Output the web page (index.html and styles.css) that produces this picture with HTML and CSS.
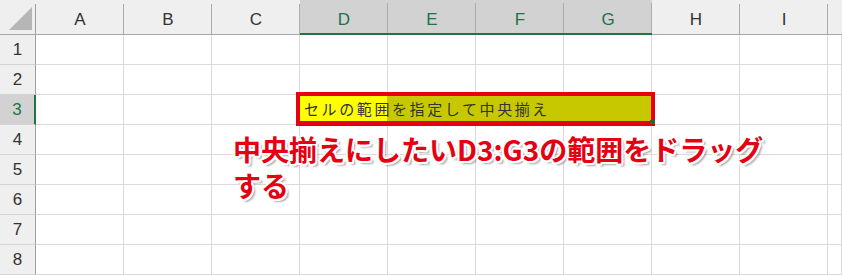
FILE: index.html
```html
<!DOCTYPE html>
<html>
    <head>
        <meta charset = utf-8>
        <title>中央揃え</title>
        <link rel="stylesheet" href="styles.css">
    </head>

    <body>
        <div class = sheet>
            <div class = corner>
                <svg width = 23 height = 23 viewBox = '0 0 23 23'><polygon points = '0,23 23,0 23,23' fill = '#b6b6b6'/></svg>
            </div>
            <div class = col>A</div>
            <div class = col>B</div>
            <div class = col>C</div>
            <div class = 'col on'>D</div>
            <div class = 'col on'>E</div>
            <div class = 'col on'>F</div>
            <div class = 'col on'>G</div>
            <div class = col>H</div>
            <div class = col>I</div>
            <div class = 'col last'></div>

            <div class = num>1</div>
            <div class = cell></div><div class = cell></div><div class = cell></div><div class = cell></div><div class = cell></div>
            <div class = cell></div><div class = cell></div><div class = cell></div><div class = cell></div><div class = cell></div>

            <div class = num>2</div>
            <div class = cell></div><div class = cell></div><div class = cell></div><div class = cell></div><div class = cell></div>
            <div class = cell></div><div class = cell></div><div class = cell></div><div class = cell></div><div class = cell></div>

            <div class = 'num on'>3</div>
            <div class = cell></div><div class = cell></div><div class = cell></div>
            <div class = range>セルの範囲を指定して中央揃え</div>
            <div class = cell></div><div class = cell></div><div class = cell></div>

            <div class = num>4</div>
            <div class = cell></div><div class = cell></div><div class = cell></div><div class = cell></div><div class = cell></div>
            <div class = cell></div><div class = cell></div><div class = cell></div><div class = cell></div><div class = cell></div>

            <div class = num>5</div>
            <div class = cell></div><div class = cell></div><div class = cell></div><div class = cell></div><div class = cell></div>
            <div class = cell></div><div class = cell></div><div class = cell></div><div class = cell></div><div class = cell></div>

            <div class = num>6</div>
            <div class = cell></div><div class = cell></div><div class = cell></div><div class = cell></div><div class = cell></div>
            <div class = cell></div><div class = cell></div><div class = cell></div><div class = cell></div><div class = cell></div>

            <div class = num>7</div>
            <div class = cell></div><div class = cell></div><div class = cell></div><div class = cell></div><div class = cell></div>
            <div class = cell></div><div class = cell></div><div class = cell></div><div class = cell></div><div class = cell></div>

            <div class = num>8</div>
            <div class = cell></div><div class = cell></div><div class = cell></div><div class = cell></div><div class = cell></div>
            <div class = cell></div><div class = cell></div><div class = cell></div><div class = cell></div><div class = cell></div>
        </div>

        <p class = note>中央揃えにしたいD3:G3の範囲をドラッグ<br>する</p>
    </body>
</html>
```

FILE: styles.css
```css
html {
    font-family: "Liberation Sans", "Noto Sans CJK JP", sans-serif;
    background: #fff;
}

body {
    margin: 0;
    position: relative;
    overflow: hidden;
}

.sheet {
    display: grid;
    grid-template-columns: 36px repeat(9, 88px) 1fr;
    grid-template-rows: 35px repeat(8, 30px);
}

.sheet > div {
    box-sizing: border-box;
}

.corner {
    background: #efefef linear-gradient(#9e9e9e, #9e9e9e) right bottom / 1px 30px no-repeat;
    border-bottom: 1px solid #a6a6a6;
    display: flex;
    align-items: flex-end;
    justify-content: flex-end;
    padding: 0 4px 4px 0;
}

.corner svg {display: block}

.col {
    background: #efefef linear-gradient(#ababab, #ababab) right bottom / 1px 30px no-repeat;
    border-bottom: 1px solid #a6a6a6;
    color: #333;
    font-size: 17px;
    display: flex;
    align-items: center;
    justify-content: center;
    padding-top: 5px;
}

.col.on {
    background-color: #d2d2d2;
    color: #217346;
    border-bottom: 2px solid #217346;
    padding-top: 6px;
}

.col.last {background-image: none}

.num {
    background: #efefef;
    border-right: 1px solid #9e9e9e;
    border-bottom: 1px solid #d4d4d4;
    color: #333;
    font-size: 17px;
    display: flex;
    align-items: center;
    justify-content: center;
}

.num.on {
    background: #d2d2d2;
    color: #217346;
    border-right: 2px solid #217346;
}

.cell {
    border-right: 1px solid #dadada;
    border-bottom: 1px solid #dadada;
}

.range {
    grid-column: span 4;
    margin: -3px -3px 0 -4px;
    border: 4px solid #e50012;
    background: linear-gradient(90deg, #ffff00 87px, #c8c800 87px);
    box-shadow: 0 1px 0 #1e5a35;
    position: relative;
    z-index: 1;
    display: flex;
    align-items: center;
    padding-left: 4px;
    font-family: "Noto Sans CJK JP", sans-serif;
    font-size: 15px;
    letter-spacing: 2.6px;
    color: #333;
    white-space: nowrap;
}

.range::after {
    content: '';
    position: absolute;
    right: -4px;
    bottom: -3px;
    width: 5px;
    height: 4px;
    background: #1e6b3c;
}

.note {
    position: absolute;
    left: 233px;
    top: 131px;
    margin: 0;
    z-index: 2;
    font-family: "Noto Sans CJK JP", sans-serif;
    font-weight: bold;
    font-size: 28px;
    line-height: 36px;
    color: #e50012;
    white-space: nowrap;
    text-shadow:
        2px 0 #fff, -2px 0 #fff, 0 2px #fff, 0 -2px #fff,
        1.5px 1.5px #fff, -1.5px 1.5px #fff, 1.5px -1.5px #fff, -1.5px -1.5px #fff,
        3px 3px 2px rgba(0, 0, 0, .35);
}
```
